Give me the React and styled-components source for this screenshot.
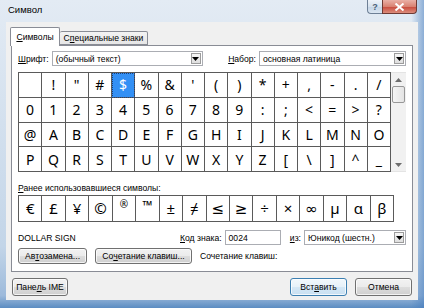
import React from "react";
import styled, { createGlobalStyle } from "styled-components";

const GlobalStyle = createGlobalStyle`
  html, body {
    margin: 0;
    padding: 0;
  }
  body {
    width: 424px;
    height: 308px;
    overflow: hidden;
    font-family: "Liberation Sans", Arial, sans-serif;
  }
`;

const rows = [
  [" ", "!", '"', "#", "$", "%", "&", "'", "(", ")", "*", "+", ",", "-", ".", "/"],
  "0123456789:;<=>?".split(""),
  "@ABCDEFGHIJKLMNO".split(""),
  "PQRSTUVWXYZ[\\]^_".split(""),
];

const recent = ["€", "£", "¥", "©", "®", "™", "±", "≠", "≤", "≥", "÷", "×", "∞", "µ", "α", "β"];

const DropArrow = () => (
  <svg width="7" height="4" viewBox="0 0 7 4">
    <path d="M0 0h7L3.5 4z" fill="#000" />
  </svg>
);

const App = () => {
  return (
    <>
      <GlobalStyle />
      <Window>
        <TitleBar>
          <Title>Символ</Title>
          <Caption>
            <HelpButton>?</HelpButton>
            <CloseButton>
              <svg width="11" height="8" viewBox="0 0 11 8">
                <path d="M1.5 0.5l8 7M9.5 0.5l-8 7" stroke="#fff" strokeWidth="2" />
              </svg>
            </CloseButton>
          </Caption>
        </TitleBar>

        <Client>
          <TabRow>
            <Tab $active $w={50}>
              <U>С</U>имволы
            </Tab>
            <Tab $w={88}>
              С<U>п</U>ециальные знаки
            </Tab>
          </TabRow>

          <TabPanel>
            <FontRow>
              <Group>
                <Label>
                  <U>Ш</U>рифт:
                </Label>
                <Select $w={151}>
                  (обычный текст)
                  <DropButton>
                    <DropArrow />
                  </DropButton>
                </Select>
              </Group>
              <Group>
                <Label>
                  <U>Н</U>абор:
                </Label>
                <Select $w={147}>
                  основная латиница
                  <DropButton>
                    <DropArrow />
                  </DropButton>
                </Select>
              </Group>
            </FontRow>

            <GridArea>
              <SymbolGrid>
                {rows.flat().map((ch, i) => (
                  <Cell key={i} $selected={ch === "$"}>
                    {ch}
                  </Cell>
                ))}
              </SymbolGrid>
              <Scrollbar>
                <ScrollArrow>
                  <svg width="7" height="4" viewBox="0 0 7 4">
                    <path d="M0 4h7L3.5 0z" fill="#6d6d6d" />
                  </svg>
                </ScrollArrow>
                <Thumb />
                <ScrollSpacer />
                <ScrollArrow>
                  <svg width="7" height="4" viewBox="0 0 7 4">
                    <path d="M0 0h7L3.5 4z" fill="#6d6d6d" />
                  </svg>
                </ScrollArrow>
              </Scrollbar>
            </GridArea>

            <RecentLabel>
              <U>Р</U>анее использовавшиеся символы:
            </RecentLabel>
            <RecentRow>
              {recent.map((ch, i) => (
                <RecentCell key={i} $small={ch === "®" || ch === "™"} $size={ch === "™" ? 13 : ch === "®" ? 10 : 15}>
                  {ch}
                </RecentCell>
              ))}
            </RecentRow>

            <InfoRow>
              <CharName>DOLLAR SIGN</CharName>
              <Group>
                <Label>
                  <U>К</U>од знака:
                </Label>
                <CodeInput>0024</CodeInput>
              </Group>
              <PushRight>
                <Label>
                  <U>и</U>з:
                </Label>
                <Select $w={102}>
                  Юникод (шестн.)
                  <DropButton>
                    <DropArrow />
                  </DropButton>
                </Select>
              </PushRight>
            </InfoRow>

            <ButtonRow>
              <Button $w={69} $h={16}>
                Ав<U>т</U>озамена...
              </Button>
              <Button $w={97} $h={16}>
                Со<U>ч</U>етание клавиш...
              </Button>
              <Label>Сочетание клавиш:</Label>
            </ButtonRow>
          </TabPanel>

          <BottomRow>
            <Button $w={56} $h={18}>
              Пане<U>л</U>ь IME
            </Button>
            <PushRight $gap={8}>
              <Button $w={57} $h={18} $default>
                Вст<U>а</U>вить
              </Button>
              <Button $w={57} $h={18}>
                Отмена
              </Button>
            </PushRight>
          </BottomRow>
        </Client>
      </Window>
    </>
  );
};

const Window = styled.div`
  width: 424px;
  height: 308px;
  box-sizing: border-box;
  padding: 0 6px 8px;
  display: flex;
  flex-direction: column;
  background: linear-gradient(to right, rgba(255, 255, 255, 0) 97%, rgba(70, 125, 190, 0.55) 100%),
    linear-gradient(to bottom, #e3ebf4 0%, #d3e0ee 40%, #c3d5e8 80%, #9dbadb 96%, #5b8cc2 100%);
`;

const TitleBar = styled.div`
  height: 22px;
  display: flex;
  align-items: flex-start;
`;

const Title = styled.div`
  margin-top: 4px;
  padding-left: 2px;
  font-size: 9.5px;
  line-height: 12px;
  color: #000;
`;

const Caption = styled.div`
  margin-left: auto;
  margin-right: 1px;
  display: flex;
`;

const HelpButton = styled.div`
  width: 15px;
  height: 14px;
  box-sizing: border-box;
  border: 1px solid #6e8096;
  border-top: none;
  border-right: none;
  border-radius: 0 0 0 4px;
  background: linear-gradient(#eef3f9, #d7e2ee 50%, #c4d4e6 51%, #dbe6f2);
  display: flex;
  align-items: center;
  justify-content: center;
  font-size: 9px;
  font-weight: bold;
  color: #4a5f78;
`;

const CloseButton = styled.div`
  width: 35px;
  height: 14px;
  box-sizing: border-box;
  border: 1px solid #6e3a34;
  border-top: none;
  border-radius: 0 0 4px 0;
  background: linear-gradient(#eab0a6, #d98272 50%, #c8483a 51%, #dc8d7c);
  display: flex;
  align-items: center;
  justify-content: center;
`;

const Client = styled.div`
  flex: 1;
  background: #f0f0f0;
  padding: 5px 5px 4px;
  display: flex;
  flex-direction: column;
  box-sizing: border-box;
`;

const U = styled.span`
  text-decoration: underline;
`;

const TabRow = styled.div`
  height: 18px;
  display: flex;
  align-items: flex-end;
`;

const Tab = styled.div`
  width: ${(p) => p.$w}px;
  height: ${(p) => (p.$active ? 19 : 14)}px;
  margin-bottom: ${(p) => (p.$active ? -1 : 0)}px;
  margin-left: ${(p) => (p.$active ? -1 : 0)}px;
  box-sizing: border-box;
  border: 1px solid #898c95;
  border-bottom: ${(p) => (p.$active ? "none" : "1px solid #898c95")};
  border-left: ${(p) => (p.$active ? "1px solid #898c95" : "none")};
  border-radius: 2px 2px 0 0;
  background: ${(p) => (p.$active ? "#fff" : "linear-gradient(#f3f3f3, #e6e6e6)")};
  position: relative;
  z-index: ${(p) => (p.$active ? 1 : 0)};
  display: flex;
  align-items: center;
  justify-content: center;
  padding-bottom: ${(p) => (p.$active ? 1 : 0)}px;
  font-size: 8.6px;
  color: #000;
  white-space: nowrap;
`;

const TabPanel = styled.div`
  border: 1px solid #898c95;
  background: #fff;
  padding: 5px 6px 7px;
  display: flex;
  flex-direction: column;
`;

const FontRow = styled.div`
  height: 15px;
  display: flex;
  align-items: center;
  justify-content: space-between;
`;

const Group = styled.div`
  display: flex;
  align-items: center;
  gap: 3px;
`;

const PushRight = styled.div`
  margin-left: auto;
  display: flex;
  align-items: center;
  gap: ${(p) => p.$gap ?? 3}px;
`;

const Label = styled.span`
  font-size: 8.6px;
  color: #000;
  white-space: nowrap;
`;

const Select = styled.div`
  width: ${(p) => p.$w}px;
  height: 15px;
  box-sizing: border-box;
  border: 1px solid #abadb3;
  background: #fff;
  display: flex;
  align-items: center;
  padding-left: 3px;
  font-size: 8.6px;
  color: #000;
  white-space: nowrap;
`;

const DropButton = styled.div`
  margin-left: auto;
  margin-right: 1px;
  width: 10px;
  height: 11px;
  box-sizing: border-box;
  border: 1px solid #9c9c9c;
  background: linear-gradient(#f7f7f7, #dedede);
  display: flex;
  align-items: center;
  justify-content: center;
`;

const GridArea = styled.div`
  margin-top: 6px;
  height: 100px;
  display: flex;
`;

const SymbolGrid = styled.div`
  width: 373px;
  box-sizing: border-box;
  display: grid;
  grid-template-columns: repeat(16, 1fr);
  grid-template-rows: repeat(4, 1fr);
  border-top: 1px solid #5a5a5a;
  border-left: 1px solid #5a5a5a;
`;

const Cell = styled.div`
  border-right: 1px solid #5a5a5a;
  border-bottom: 1px solid #5a5a5a;
  display: flex;
  align-items: center;
  justify-content: center;
  font-family: "Noto Sans", "DejaVu Sans", sans-serif;
  font-size: 14px;
  color: ${(p) => (p.$selected ? "#fff" : "#000")};
  background: ${(p) => (p.$selected ? "#3390f5" : "transparent")};
  outline: ${(p) => (p.$selected ? "1px dotted #1a3f7a" : "none")};
  outline-offset: -1px;
`;

const Scrollbar = styled.div`
  width: 15px;
  display: flex;
  flex-direction: column;
  background: #f1f1f1;
  border-top: 1px solid #e4e4e4;
  border-bottom: 1px solid #e4e4e4;
  box-sizing: border-box;
`;

const ScrollArrow = styled.div`
  height: 13px;
  display: flex;
  align-items: center;
  justify-content: center;
`;

const Thumb = styled.div`
  height: 17px;
  margin: 0 1px;
  box-sizing: border-box;
  border: 1px solid #979797;
  border-radius: 2px;
  background: linear-gradient(to right, #f5f5f5, #e4e4e4);
`;

const ScrollSpacer = styled.div`
  flex: 1;
`;

const RecentLabel = styled.div`
  margin-top: 9px;
  height: 14px;
  line-height: 14px;
  font-size: 8.6px;
  color: #000;
`;

const RecentRow = styled.div`
  width: 376px;
  height: 27px;
  box-sizing: border-box;
  display: grid;
  grid-template-columns: repeat(16, 1fr);
  border-top: 1px solid #5a5a5a;
  border-left: 1px solid #5a5a5a;
`;

const RecentCell = styled.div`
  border-right: 1px solid #5a5a5a;
  border-bottom: 1px solid #5a5a5a;
  display: flex;
  align-items: ${(p) => (p.$small ? "flex-start" : "center")};
  padding-top: ${(p) => (p.$small ? 3 : 0)}px;
  justify-content: center;
  font-family: "Noto Sans", "DejaVu Sans", sans-serif;
  font-size: ${(p) => p.$size}px;
  line-height: 1;
  color: #000;
`;

const InfoRow = styled.div`
  margin-top: 8px;
  height: 15px;
  display: flex;
  align-items: center;
`;

const CharName = styled.div`
  width: 162px;
  font-size: 8.6px;
  color: #000;
`;

const CodeInput = styled.div`
  width: 56px;
  height: 15px;
  box-sizing: border-box;
  border: 1px solid #abadb3;
  background: #fff;
  display: flex;
  align-items: center;
  padding-left: 3px;
  font-size: 8.6px;
`;

const ButtonRow = styled.div`
  margin-top: 3px;
  height: 16px;
  display: flex;
  align-items: center;
  gap: 8px;
`;

const Button = styled.div`
  width: ${(p) => p.$w}px;
  height: ${(p) => p.$h}px;
  box-sizing: border-box;
  border: 1px solid ${(p) => (p.$default ? "#3c7fb1" : "#707070")};
  border-radius: 3px;
  background: ${(p) =>
    p.$default
      ? "linear-gradient(#f2f8fc, #e6f1f9 50%, #d4e7f5 51%, #c9e0f2)"
      : "linear-gradient(#f2f2f2, #ebebeb 50%, #dddddd 51%, #cfcfcf)"};
  box-shadow: inset 0 0 0 1px rgba(255, 255, 255, 0.75);
  display: flex;
  align-items: center;
  justify-content: center;
  font-size: 8.6px;
  color: #000;
  white-space: nowrap;
`;

const BottomRow = styled.div`
  margin-top: 6px;
  height: 18px;
  padding: 0 1px;
  display: flex;
  align-items: center;
`;

export default App;
